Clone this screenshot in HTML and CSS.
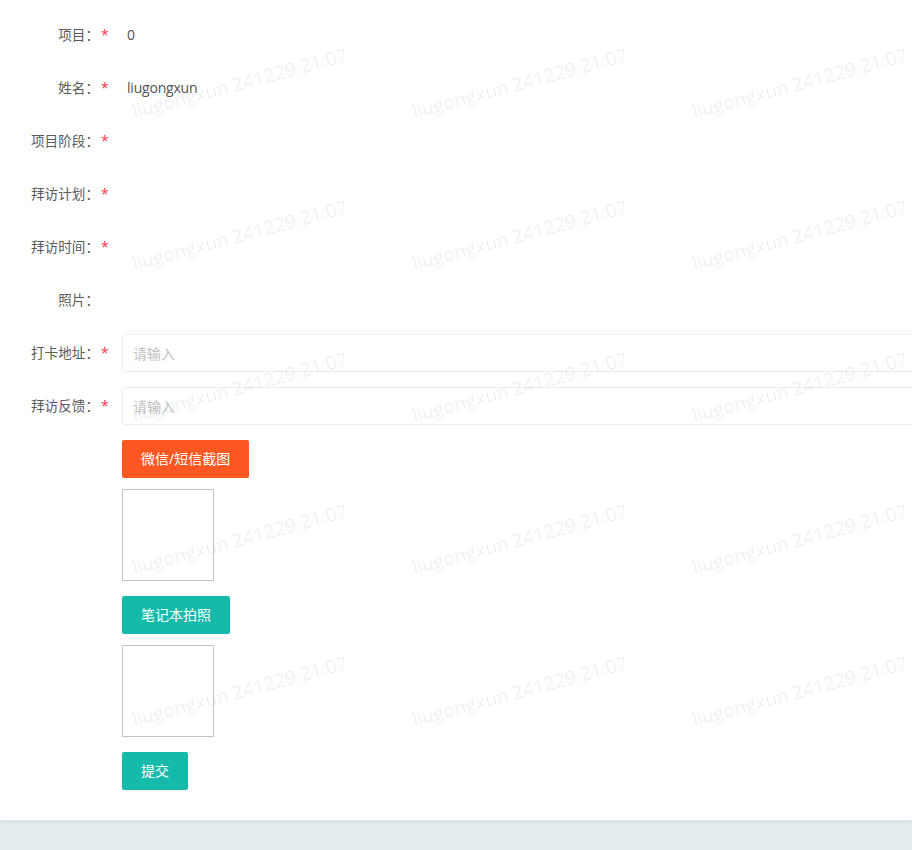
FILE: index.html
```html
<!DOCTYPE html>
<html lang="zh-CN">
<head>
<meta charset="utf-8">
<title>拜访记录</title>
<link rel="stylesheet" href="styles.css">
</head>
<body>
<div class="card">
  <form class="form">
    <div class="row">
      <div class="label"><span class="label-text">项目：</span><span class="req">*</span></div>
      <div class="value">0</div>
    </div>
    <div class="row">
      <div class="label"><span class="label-text">姓名：</span><span class="req">*</span></div>
      <div class="value">liugongxun</div>
    </div>
    <div class="row">
      <div class="label"><span class="label-text">项目阶段：</span><span class="req">*</span></div>
      <div class="value"></div>
    </div>
    <div class="row">
      <div class="label"><span class="label-text">拜访计划：</span><span class="req">*</span></div>
      <div class="value"></div>
    </div>
    <div class="row">
      <div class="label"><span class="label-text">拜访时间：</span><span class="req">*</span></div>
      <div class="value"></div>
    </div>
    <div class="row">
      <div class="label"><span class="label-text">照片：</span><span class="req"></span></div>
      <div class="value"></div>
    </div>
    <div class="row">
      <div class="label"><span class="label-text">打卡地址：</span><span class="req">*</span></div>
      <input class="input" type="text" placeholder="请输入">
    </div>
    <div class="row">
      <div class="label"><span class="label-text">拜访反馈：</span><span class="req">*</span></div>
      <input class="input" type="text" placeholder="请输入">
    </div>
    <div class="block">
      <button type="button" class="btn btn-orange">微信/短信截图</button>
      <div class="thumb"></div>
      <button type="button" class="btn btn-teal">笔记本拍照</button>
      <div class="thumb"></div>
      <button type="button" class="btn btn-teal">提交</button>
    </div>
  </form>
  <div class="watermarks" aria-hidden="true">
    <div class="wm"><span>liugongxun 241229 21:07</span></div>
    <div class="wm"><span>liugongxun 241229 21:07</span></div>
    <div class="wm"><span>liugongxun 241229 21:07</span></div>
    <div class="wm"><span>liugongxun 241229 21:07</span></div>
    <div class="wm"><span>liugongxun 241229 21:07</span></div>
    <div class="wm"><span>liugongxun 241229 21:07</span></div>
    <div class="wm"><span>liugongxun 241229 21:07</span></div>
    <div class="wm"><span>liugongxun 241229 21:07</span></div>
    <div class="wm"><span>liugongxun 241229 21:07</span></div>
    <div class="wm"><span>liugongxun 241229 21:07</span></div>
    <div class="wm"><span>liugongxun 241229 21:07</span></div>
    <div class="wm"><span>liugongxun 241229 21:07</span></div>
    <div class="wm"><span>liugongxun 241229 21:07</span></div>
    <div class="wm"><span>liugongxun 241229 21:07</span></div>
    <div class="wm"><span>liugongxun 241229 21:07</span></div>
  </div>
</div>
</body>
</html>
```
FILE: styles.css
```css
* { box-sizing: border-box; }
html, body {
  margin: 0;
  padding: 0;
  background: #e6edf0;
  overflow-x: hidden;
}
body {
  font-family: "Open Sans", "Noto Sans CJK SC", sans-serif;
  font-size: 14px;
  color: #555;
  height: 850px;
}
.card {
  position: relative;
  background: #fff;
  padding: 16px 0 30px 0;
  overflow: hidden;
  box-shadow: 0 1px 2px rgba(0, 0, 0, 0.07);
  border-bottom: 1px solid #e1e7ea;
}
.form { margin: 0; }
.row {
  display: flex;
  align-items: center;
  height: 38px;
  margin-bottom: 15px;
}
.label {
  flex: 0 0 122px;
  display: flex;
  align-items: center;
  line-height: 20px;
  color: #5a5a5a;
}
.label-text {
  width: 99px;
  text-align: right;
  white-space: nowrap;
  font-size: 13.6px;
}
.req {
  width: 8px;
  margin-left: 2px;
  color: #fa3b4a;
  font-size: 14px;
}
.value {
  padding-left: 5px;
  line-height: 20px;
  color: #555;
  letter-spacing: -0.2px;
}
.input {
  flex: 0 0 calc(100% - 112px);
  height: 38px;
  border: 1px solid #eee;
  border-radius: 2px;
  padding: 0 10px;
  font-family: inherit;
  font-size: 14px;
  color: #555;
  outline: none;
  background: #fff;
}
.input::placeholder { color: #c2c2c2; }
.block {
  margin-left: 122px;
  display: flex;
  flex-direction: column;
  align-items: flex-start;
}
.btn {
  height: 38px;
  line-height: 36px;
  padding: 0 18px;
  border: 1px solid transparent;
  border-radius: 2px;
  color: #fff;
  font-family: inherit;
  font-size: 14px;
  cursor: pointer;
}
.btn-orange { background: #ff5722; }
.btn-teal { background: #16baaa; }
.thumb {
  width: 92px;
  height: 92px;
  border: 1px solid #c3c3c3;
  margin: 11px 0 15px;
}
.watermarks {
  position: absolute;
  top: 0;
  left: 0;
  padding: 7px 0 0 100px;
  display: grid;
  grid-template-columns: repeat(3, 280px);
  grid-auto-rows: 152px;
  pointer-events: none;
}
.wm {
  display: flex;
  align-items: center;
  justify-content: center;
}
.wm span {
  display: block;
  white-space: nowrap;
  font-family: "Open Sans", sans-serif;
  font-size: 19px;
  color: rgba(0, 0, 0, 0.075);
  transform: rotate(-15deg);
}
```
